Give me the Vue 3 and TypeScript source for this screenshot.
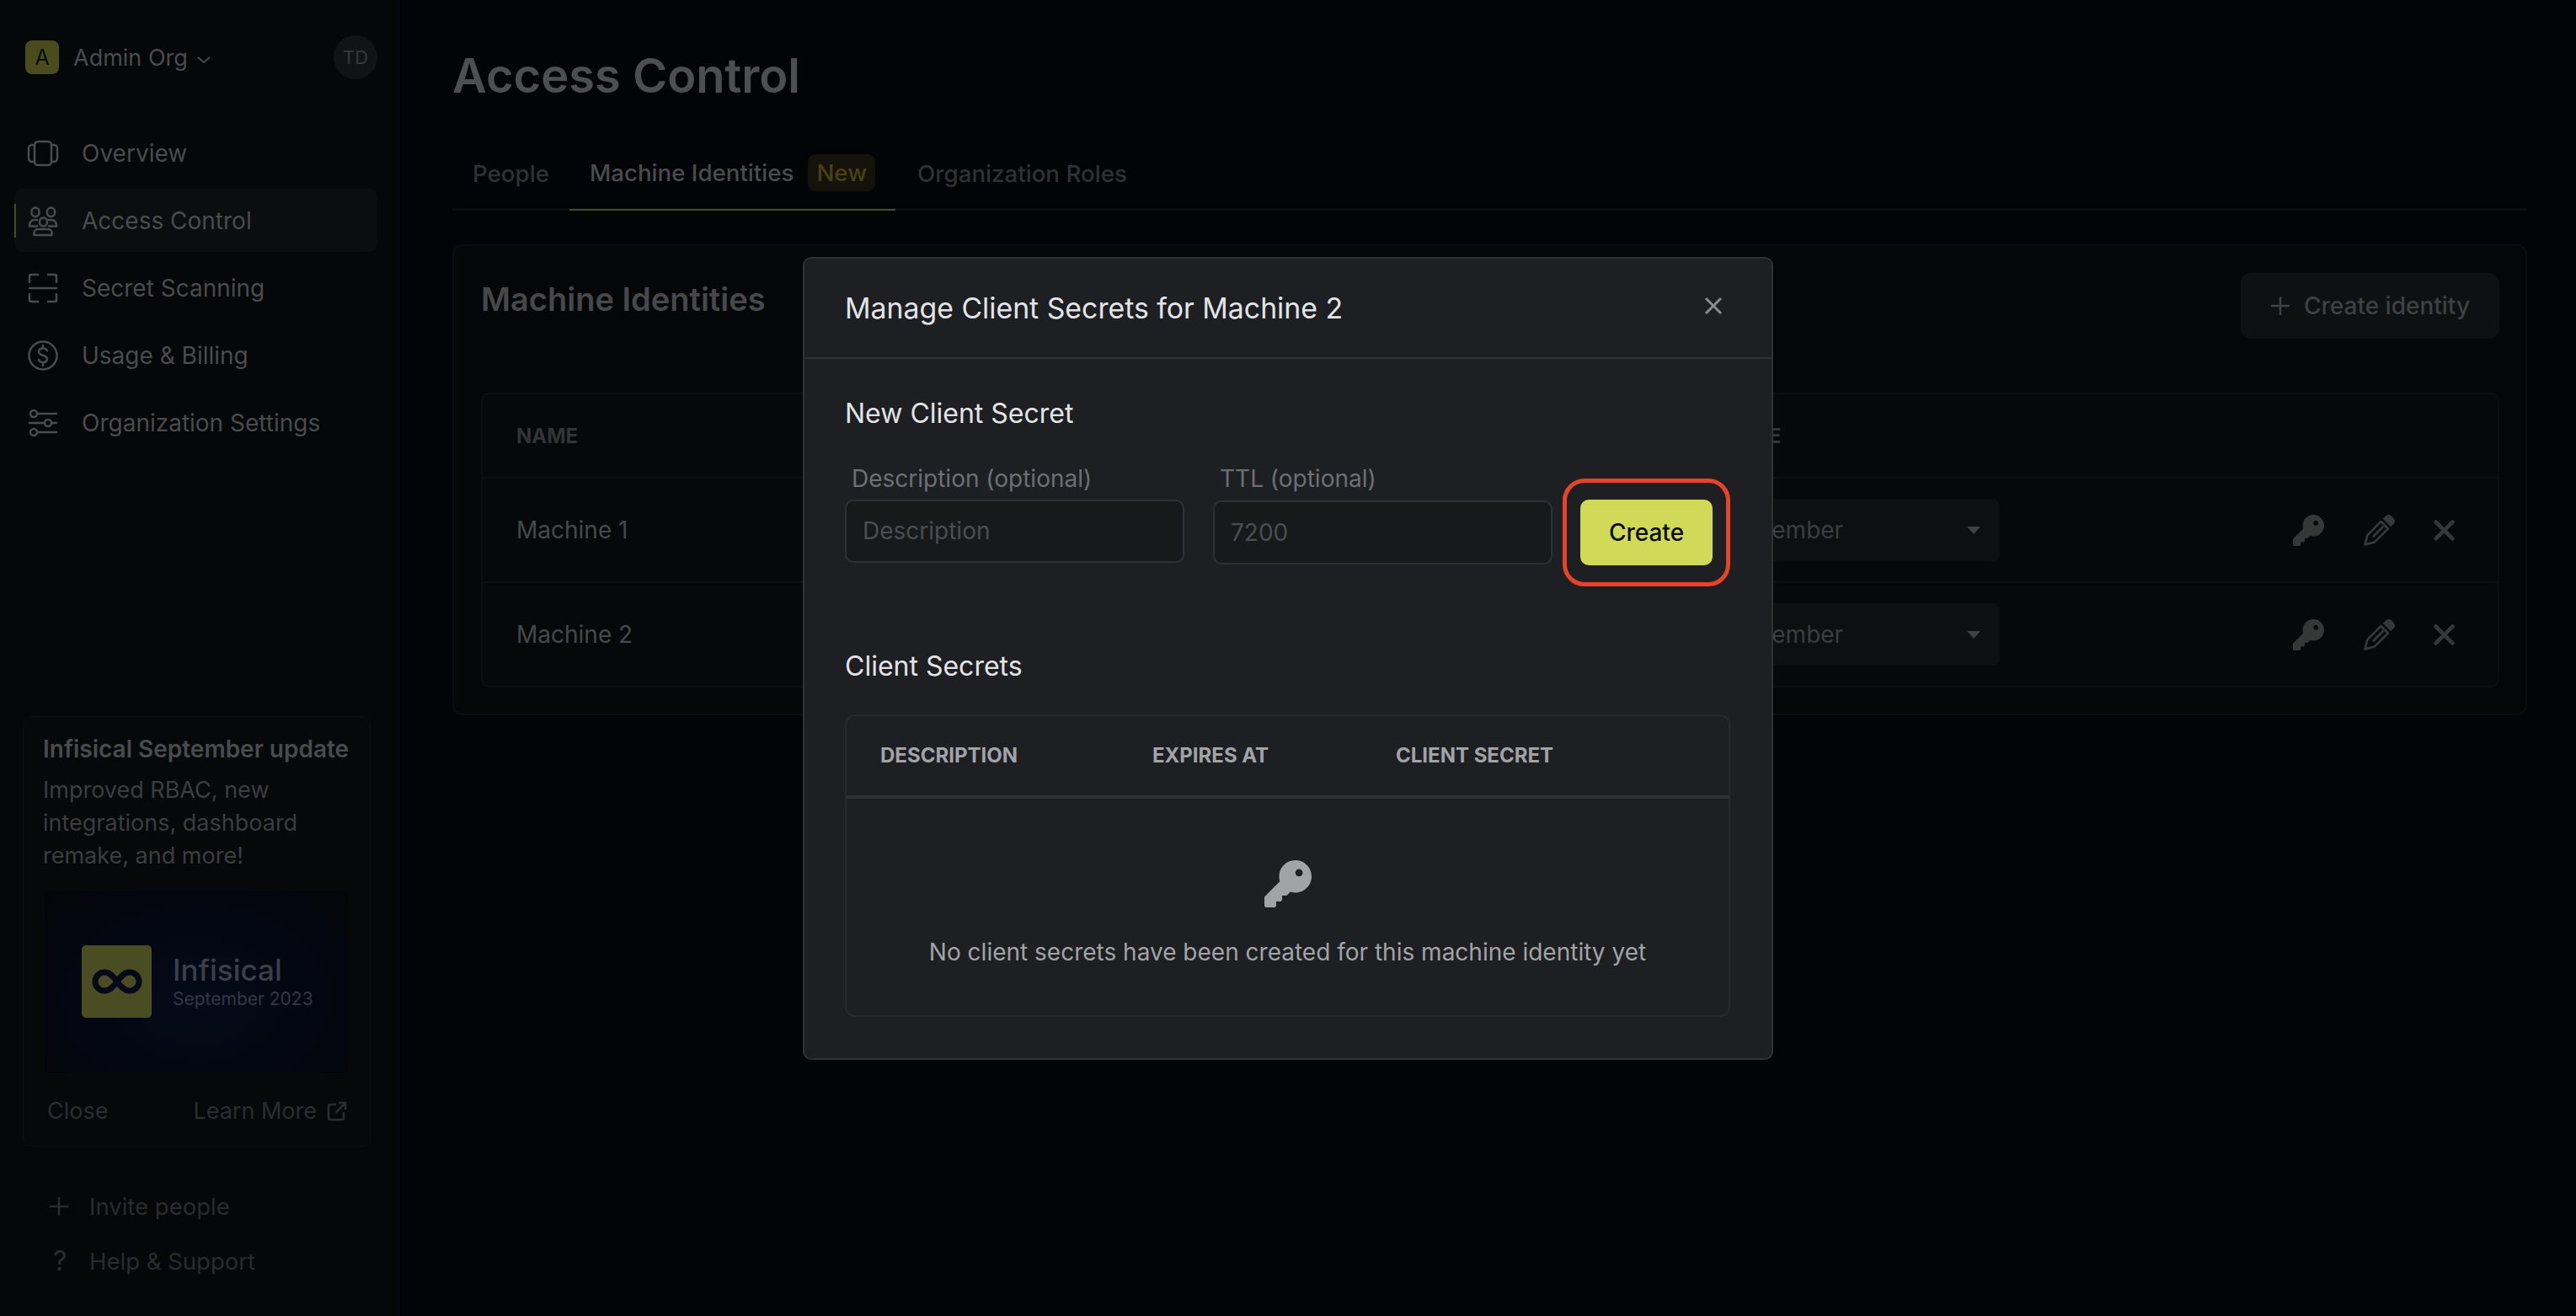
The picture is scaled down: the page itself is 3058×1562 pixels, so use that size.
<template>
  <div class="app">
    <aside class="sidebar">
      <div class="side-top">
        <div class="org-row">
          <div class="org">
            <span class="org-logo">A</span>
            <span class="org-name">Admin Org</span>
            <svg class="chev" viewBox="0 0 18 10"><path d="M2 2l7 6 7-6" /></svg>
          </div>
          <span class="avatar">TD</span>
        </div>
        <nav class="nav">
          <a v-for="item in navItems" :key="item.label" class="nav-item" :class="{ active: item.active }">
            <svg class="nav-icon" viewBox="0 0 36 36" v-html="item.icon"></svg>
            <span>{{ item.label }}</span>
          </a>
        </nav>
      </div>
      <div class="side-bottom">
        <div class="update-card">
          <div class="update-title">Infisical September update</div>
          <p class="update-text">Improved RBAC, new integrations, dashboard remake, and more!</p>
          <div class="update-image">
            <div class="inf-logo">
              <svg viewBox="0 0 60 32"><path d="M30 16c-5-7-9-11-15-11a11 11 0 0 0 0 22c6 0 10-4 15-11s9-11 15-11a11 11 0 0 1 0 22c-6 0-10-4-15-11z" /></svg>
            </div>
            <div class="inf-text">
              <div class="inf-name">Infisical</div>
              <div class="inf-date">September 2023</div>
            </div>
          </div>
          <div class="update-actions">
            <span>Close</span>
            <span class="learn">
              Learn More
              <svg viewBox="0 0 24 24"><path d="M11 4H4a2 2 0 0 0-2 2v14a2 2 0 0 0 2 2h14a2 2 0 0 0 2-2v-7M10 14L22 2M14 2h8v8" /></svg>
            </span>
          </div>
        </div>
        <div class="side-links">
          <div class="side-link">
            <svg class="link-plus" viewBox="0 0 22 22"><path d="M11 0v22M0 11h22" /></svg>
            Invite people
          </div>
          <div class="side-link"><span class="link-glyph">?</span>Help &amp; Support</div>
        </div>
      </div>
    </aside>

    <main class="main">
      <h1>Access Control</h1>
      <div class="tabs">
        <span class="tab">People</span>
        <span class="tab current">Machine Identities <em class="new">New</em></span>
        <span class="tab">Organization Roles</span>
      </div>
      <section class="panel">
        <div class="panel-head">
          <h2>Machine Identities</h2>
          <button class="create-identity">
            <svg viewBox="0 0 24 24"><path d="M12 1v22M1 12h22" /></svg>
            Create identity
          </button>
        </div>
        <div class="table">
          <div class="row head">
            <span>NAME</span>
            <span class="role-head">ROLE</span>
          </div>
          <div v-for="name in machines" :key="name" class="row">
            <span>{{ name }}</span>
            <div class="select"><span>Member</span><i class="caret"></i></div>
            <div class="actions">
              <svg class="key" viewBox="0 0 512 512"><path :d="keyPath" /></svg>
              <svg class="pencil" viewBox="0 0 512 512">
                <path class="pencil-cap" d="M362.7 18.7L314.3 67.100l130.600 130.600 48.400-48.400c25-25 25-65.500 0-90.500L453.300 18.700c-25-25-65.500-25-90.500 0z" />
                <path class="pencil-body" d="M284 112L74 322c-8 8-14 18-18 29L22 490l139-34c11-4 21-10 29-18L400 228z" />
                <path class="pencil-body" d="M326 186L150 362" />
              </svg>
              <svg class="xmark" viewBox="0 0 24 24"><path d="M2.500 2.500l19 19M21.500 2.500l-19 19" /></svg>
            </div>
          </div>
        </div>
      </section>
    </main>

    <div class="overlay">
      <div class="modal">
        <header class="modal-head">
          <span>Manage Client Secrets for Machine 2</span>
          <svg class="close" viewBox="0 0 24 24"><path d="M3 3l18 18M21 3L3 21" /></svg>
        </header>
        <div class="modal-body">
          <h3>New Client Secret</h3>
          <div class="form-row">
            <label class="field">
              <span>Description (optional)</span>
              <input placeholder="Description" />
            </label>
            <label class="field ttl">
              <span>TTL (optional)</span>
              <input placeholder="7200" />
            </label>
            <div class="highlight"><button class="create">Create</button></div>
          </div>
          <h3 class="secrets-title">Client Secrets</h3>
          <div class="secrets">
            <div class="secrets-head">
              <span>DESCRIPTION</span>
              <span>EXPIRES AT</span>
              <span>CLIENT SECRET</span>
            </div>
            <div class="empty">
              <svg viewBox="0 0 512 512"><path :d="keyPath" /></svg>
              <p>No client secrets have been created for this machine identity yet</p>
            </div>
          </div>
        </div>
      </div>
    </div>
  </div>
</template>

<script setup lang="ts">
const keyPath =
  "M336 352c97.2 0 176-78.8 176-176S433.2 0 336 0S160 78.8 160 176c0 18.7 2.9 36.8 8.3 53.7L7 391c-4.5 4.5-7 10.6-7 17v80c0 13.3 10.7 24 24 24h80c13.3 0 24-10.7 24-24V448h40c13.3 0 24-10.7 24-24V384h40c6.4 0 12.5-2.5 17-7l33.3-33.3c16.9 5.4 35 8.3 53.7 8.3zM376 96a40 40 0 1 1 0 80 40 40 0 1 1 0-80z"

const navItems = [
  {
    label: "Overview",
    icon: '<rect x="8" y="4" width="20" height="28" rx="4"/><path d="M8 8H5a4 4 0 0 0-4 4v12a4 4 0 0 0 4 4h3M28 8h3a4 4 0 0 1 4 4v12a4 4 0 0 1-4 4h-3"/>',
  },
  {
    label: "Access Control",
    active: true,
    icon: '<rect x="4.500" y="2.500" width="9" height="10.500" rx="4.500"/><rect x="23" y="2.500" width="9" height="10.500" rx="4.500"/><rect x="14" y="14.500" width="9" height="10" rx="4.500"/><path d="M11 17H8a6 6 0 0 0-6 6v1.500h9M25 17h3a6 6 0 0 1 6 6v1.500h-9M7.500 35v-2.500a4.500 4.500 0 0 1 4.500-4.500h12a4.500 4.500 0 0 1 4.500 4.500V35z"/>',
  },
  {
    label: "Secret Scanning",
    icon: '<path d="M2 11V4a2 2 0 0 1 2-2h8M24 2h8a2 2 0 0 1 2 2v7M2 25v7a2 2 0 0 0 2 2h8M24 34h8a2 2 0 0 0 2-2v-7M2 18h32"/>',
  },
  {
    label: "Usage & Billing",
    icon: '<circle cx="18" cy="18" r="16.500"/><path d="M23 12.500c-.5-2-2.500-3-5-3-3 0-5 1.500-5 4 0 5.500 10 3 10 8.500 0 2.500-2 4-5 4-2.500 0-4.500-1-5-3M18 6v3.500M18 26.500V30"/>',
  },
  {
    label: "Organization Settings",
    icon: '<circle cx="7" cy="7" r="4"/><circle cx="24" cy="18" r="4"/><circle cx="7" cy="29" r="4"/><path d="M11 7h23M2 18h18M28 18h6M11 29h23"/>',
  },
]

const machines = ["Machine 1", "Machine 2"]
</script>

<style>
html,
body {
  margin: 0;
  background: #030407;
}
</style>

<style scoped>
.app {
  display: flex;
  width: 3058px;
  height: 1562px;
  overflow: hidden;
  position: relative;
  background: #030407;
  font-family: Inter, "Noto Sans", sans-serif;
  color: #4b4c4d;
}

.sidebar {
  width: 474px;
  flex: none;
  box-sizing: border-box;
  background: #060708;
  border-right: 1px solid #0a0b0c;
  padding: 42px 25px 49px 17px;
  display: flex;
  flex-direction: column;
  justify-content: space-between;
}

.org-row {
  display: flex;
  align-items: center;
  justify-content: space-between;
  padding-left: 13px;
  height: 52px;
}

.org {
  display: flex;
  align-items: center;
}

.org-logo {
  width: 40px;
  height: 40px;
  border-radius: 8px;
  background: #4a4c1d;
  color: #0a0a08;
  font-size: 25px;
  display: flex;
  align-items: center;
  justify-content: center;
}

.org-name {
  margin-left: 17px;
  font-size: 27px;
  color: #4a4b4c;
}

.chev {
  width: 18px;
  height: 10px;
  margin: 6px 0 0 10px;
  fill: none;
  stroke: #4a4b4c;
  stroke-width: 2;
}

.avatar {
  width: 52px;
  height: 52px;
  border-radius: 50%;
  background: #121315;
  color: #37383a;
  font-size: 22px;
  display: flex;
  align-items: center;
  justify-content: center;
}

.nav {
  margin-top: 50px;
  display: flex;
  flex-direction: column;
  gap: 5px;
}

.nav-item {
  height: 75px;
  width: 431px;
  box-sizing: border-box;
  padding-left: 16px;
  display: flex;
  align-items: center;
  gap: 28px;
  font-size: 28px;
  color: #4a4b4c;
  border-radius: 10px;
  position: relative;
}

.nav-item.active {
  background: #0c0d0f;
}

.nav-item.active::before {
  content: "";
  position: absolute;
  left: 0;
  top: 18px;
  width: 2px;
  height: 40px;
  background: #4a4c1d;
}

.nav-icon {
  width: 36px;
  height: 36px;
  fill: none;
  stroke: #4a4b4c;
  stroke-width: 2.5;
  stroke-linecap: round;
  stroke-linejoin: round;
  flex: none;
  overflow: visible;
}

.update-card {
  box-sizing: border-box;
  width: 413px;
  height: 511px;
  margin-left: 10px;
  padding: 20px 23px;
  background: #070809;
  border: 1px solid #0d0e10;
  border-radius: 10px;
}

.update-title {
  font-size: 28px;
  font-weight: 600;
  line-height: 36px;
  white-space: nowrap;
  color: #4a4b4c;
}

.update-text {
  margin: 11px 0 0;
  font-size: 27px;
  line-height: 39px;
  color: #3c3d3f;
}

.update-image {
  width: 360px;
  height: 216px;
  margin: 22px 0 0 2px;
  background: radial-gradient(ellipse at 50% 60%, #040a18 0%, #03060f 70%, #040507 100%);
  display: flex;
  align-items: center;
  padding-left: 44px;
  box-sizing: border-box;
  gap: 25px;
}

.inf-logo {
  width: 83px;
  height: 86px;
  border-radius: 5px;
  background: #4a4c21;
  display: flex;
  align-items: center;
  justify-content: center;
}

.inf-logo svg {
  width: 60px;
  height: 32px;
  fill: none;
  stroke: #060a18;
  stroke-width: 7;
}

.inf-name {
  font-size: 35px;
  font-weight: 500;
  color: #3b3f4a;
  line-height: 42px;
}

.inf-date {
  font-size: 21px;
  color: #333743;
  line-height: 28px;
}

.update-actions {
  display: flex;
  justify-content: space-between;
  margin-top: 29px;
  padding: 0 4px 0 5px;
  font-size: 27px;
  line-height: 33px;
  color: #2c2d2f;
}

.learn {
  display: flex;
  align-items: center;
  gap: 12px;
}

.learn svg {
  width: 24px;
  height: 24px;
  fill: none;
  stroke: #2c2d2f;
  stroke-width: 2.5;
}

.side-links {
  margin-top: 55px;
  margin-left: 42px;
  display: flex;
  flex-direction: column;
  gap: 33px;
}

.side-link {
  display: flex;
  align-items: center;
  font-size: 27.5px;
  line-height: 32px;
  color: #2a2b2d;
}

.link-plus {
  width: 22px;
  height: 22px;
  margin-right: 25px;
  fill: none;
  stroke: #2a2b2d;
  stroke-width: 2.5;
}

.link-glyph {
  width: 47px;
  font-size: 32px;
  line-height: 32px;
  text-indent: 4px;
}

.main {
  flex: 1;
  padding: 54px 58px 0 63px;
  min-width: 0;
}

h1 {
  margin: 0;
  font-size: 56px;
  line-height: 72px;
  font-weight: 600;
  color: #4d4e4f;
}

.tabs {
  margin-top: 36px;
  display: flex;
  height: 88px;
  box-sizing: border-box;
  border-bottom: 3px solid #0c0d0f;
}

.tab {
  height: 88px;
  box-sizing: border-box;
  padding: 0 24px;
  display: flex;
  align-items: center;
  font-size: 27.7px;
  font-weight: 500;
  color: #303133;
}

.tab.current {
  color: #4a4b4c;
  border-bottom: 2px solid #4a4c1d;
  margin-right: 2px;
}

.new {
  margin-left: 17px;
  padding: 0 10px;
  height: 44px;
  display: flex;
  align-items: center;
  font-style: normal;
  color: #4a4012;
  background: #14120a;
  border-radius: 9px;
}

.panel {
  margin-top: 40px;
  height: 559px;
  box-sizing: border-box;
  background: #050607;
  border: 2px solid #0b0c0e;
  border-radius: 12px;
  padding: 32px 31px 32px 32px;
}

.panel-head {
  display: flex;
  justify-content: space-between;
  align-items: flex-start;
  height: 142px;
}

h2 {
  margin: 7px 0 0;
  font-size: 38px;
  font-weight: 600;
  line-height: 48px;
  color: #47484a;
}

.create-identity {
  width: 307px;
  height: 78px;
  border: 0;
  border-radius: 12px;
  background: #0f1012;
  color: #3f4042;
  font: 500 28px Inter, sans-serif;
  display: flex;
  align-items: center;
  justify-content: center;
  gap: 16px;
}

.create-identity svg {
  width: 24px;
  height: 24px;
  fill: none;
  stroke: #3f4042;
  stroke-width: 2.5;
}

.table {
  background: #070809;
  border: 2px solid #0c0d0f;
  border-radius: 10px;
}

.row {
  display: grid;
  grid-template-columns: 1411px 350px 1fr;
  align-items: center;
  height: 124px;
  padding-left: 40px;
  font-size: 28px;
  color: #47484a;
  border-top: 2px solid #0d0e10;
  box-sizing: border-box;
}

.row.head {
  height: 98px;
  border-top: 0;
  font-size: 24px;
  font-weight: 700;
  color: #333436;
}

.role-head {
  padding-left: 28px;
}

.select {
  height: 74px;
  border-radius: 8px;
  background: #0e0f11;
  display: flex;
  align-items: center;
  justify-content: space-between;
  padding: 0 23px 0 54px;
  color: #3c3d3f;
}

.caret {
  width: 0;
  height: 0;
  border: 8px solid transparent;
  border-top: 9px solid #3f4042;
  border-bottom: 0;
}

.actions {
  display: flex;
  align-items: center;
  padding-left: 348px;
  gap: 47px;
}

.actions svg {
  fill: #363838;
  flex: none;
}

.key {
  width: 37px;
  height: 37px;
}

.pencil {
  width: 37px;
  height: 37px;
}

.pencil-body {
  fill: none;
  stroke: #363838;
  stroke-width: 38;
  stroke-linejoin: round;
}

.actions .xmark {
  width: 25px;
  height: 25px;
  fill: none;
  stroke: #363838;
  stroke-width: 4.5;
  stroke-linecap: round;
  margin-left: -1px;
}

.overlay {
  position: absolute;
  inset: 0;
  display: flex;
  align-items: center;
  justify-content: center;
}

.modal {
  width: 1152px;
  height: 953px;
  box-sizing: border-box;
  background: #1e1f23;
  border: 2px solid #2f3136;
  border-radius: 10px;
  color: #e3e4e7;
}

.modal-head {
  height: 119px;
  box-sizing: border-box;
  padding: 0 48px;
  display: flex;
  align-items: center;
  justify-content: space-between;
  font-size: 33.8px;
  font-weight: 400;
  border-bottom: 2px solid #2f3136;
}

.close {
  width: 24px;
  height: 24px;
  fill: none;
  stroke: #8b8c8e;
  stroke-width: 3;
  margin: 0 9px 4px 0;
}

.modal-body {
  padding: 45px 49px 45px 48px;
}

h3 {
  margin: 0;
  font-size: 32px;
  font-weight: 400;
  line-height: 40px;
  color: #e3e4e7;
}

.form-row {
  display: flex;
  align-items: flex-start;
  gap: 34px;
  margin-top: 40px;
}

.field {
  display: flex;
  flex-direction: column;
  gap: 8px;
  font-size: 28px;
  color: #6e6f73;
}

.field span {
  padding-left: 8px;
  line-height: 34px;
}

input {
  width: 403px;
  height: 75px;
  box-sizing: border-box;
  background: #18191b;
  border: 2px solid #2f3135;
  border-radius: 10px;
  padding: 0 19px;
  font: 28px Inter, sans-serif;
  outline: none;
}

input::placeholder {
  color: #4c4d52;
}

.ttl input {
  height: 76px;
  margin-top: 1px;
}

.highlight {
  margin: 17px 0 0 -22px;
  width: 201px;
  height: 128px;
  box-sizing: border-box;
  border: 5px solid #e5432a;
  border-radius: 26px;
  display: flex;
  align-items: center;
  padding-left: 16px;
}

.create {
  width: 157px;
  height: 78px;
  border: 0;
  border-radius: 10px;
  background: #d1d958;
  color: #0b0b08;
  font: 500 28px Inter, sans-serif;
}

.secrets-title {
  margin-top: 75px;
}

.secrets {
  margin-top: 37px;
  height: 359px;
  box-sizing: border-box;
  border: 2px solid #27292d;
  border-radius: 12px;
}

.secrets-head {
  height: 98px;
  box-sizing: border-box;
  display: grid;
  grid-template-columns: 323px 289px 1fr;
  align-items: center;
  padding-left: 40px;
  font-size: 24px;
  font-weight: 700;
  color: #a2a3a6;
  border-bottom: 4px solid #2f3136;
}

.empty {
  display: flex;
  flex-direction: column;
  align-items: center;
  padding-top: 73px;
  color: #a2a3a6;
  font-size: 28px;
}

.empty svg {
  width: 56px;
  height: 56px;
  fill: #a2a3a6;
}

.empty p {
  margin: 36px 0 0;
  line-height: 34px;
}
</style>
